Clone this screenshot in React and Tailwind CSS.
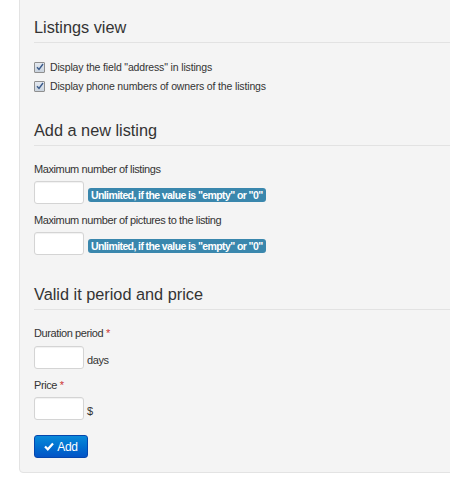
import React from "react";

const font = { fontFamily: '"Liberation Sans", Arial, sans-serif' };

function Check() {
  return (
    <span className="inline-flex items-center justify-center w-[11px] h-[11px] border border-[#8f8f8f] bg-gradient-to-b from-[#e4e9f0] to-[#c9d3de] rounded-[1px]">
      <svg width="8" height="8" viewBox="0 0 8 8">
        <path d="M1 4.2 L3 6.5 L7 1" fill="none" stroke="#3a5a8a" strokeWidth="1.4" />
      </svg>
    </span>
  );
}

function Heading({ children }) {
  return (
    <div className="border-b border-[#e2e2e2] pb-[5px]">
      <h2 className="text-[16.3px] leading-[20px] text-[#333]">{children}</h2>
    </div>
  );
}

function Badge() {
  return (
    <span className="block bg-[#3a87ad] text-white text-[10.5px] font-bold leading-[14px] tracking-[-0.6px] px-[3px] rounded-[3px] whitespace-nowrap">
      Unlimited, if the value is "empty" or "0"
    </span>
  );
}

function Input() {
  return <div className="w-[50px] h-[23px] shrink-0 bg-white border border-[#d4d4d4] rounded-[3px] shadow-[inset_0_1px_1px_rgba(0,0,0,0.06)]" />;
}

const label = "text-[11px] leading-[14px] tracking-[-0.4px]";

export default function App() {
  return (
    <div className="w-[450px] h-[490px] bg-white overflow-hidden" style={font}>
      <div className="ml-[19px] w-[460px] mt-[-10px] bg-[#f4f4f4] border border-[#e3e3e3] rounded-[4px] pl-[14px] pt-[26px] pb-[14px] text-[#333]">
        <Heading>Listings view</Heading>
        <div className="mt-[18px] flex flex-col gap-[7px] text-[10.5px] leading-[12px] tracking-[-0.15px]">
          <div className="flex items-center gap-[5px]"><Check /><span>Display the field "address" in listings</span></div>
          <div className="flex items-center gap-[5px]"><Check /><span>Display phone numbers of owners of the listings</span></div>
        </div>

        <div className="mt-[28px]"><Heading>Add a new listing</Heading></div>
        <div className={"mt-[16px] " + label}>Maximum number of listings</div>
        <div className="mt-[5px] flex items-end gap-[4px]"><Input /><span className="mb-[2px]"><Badge /></span></div>
        <div className={"mt-[9px] " + label}>Maximum number of pictures to the listing</div>
        <div className="mt-[5px] flex items-end gap-[4px]"><Input /><span className="mb-[2px]"><Badge /></span></div>

        <div className="mt-[29px]"><Heading>Valid it period and price</Heading></div>
        <div className={"mt-[16px] " + label}>Duration period <span className="text-[#c33]">*</span></div>
        <div className="mt-[6px] flex items-end gap-[3px]"><Input /><span className={label + " mb-[2px]"}>days</span></div>
        <div className={"mt-[9px] " + label}>Price <span className="text-[#c33]">*</span></div>
        <div className="mt-[5px] flex items-end gap-[3px]"><Input /><span className={label + " mb-[2px]"}>$</span></div>
        <button className="mt-[15px] w-[54px] h-[23px] rounded-[3px] bg-gradient-to-b from-[#0b8ad9] to-[#0453c6] border border-[#0446ad] text-white text-[12px] tracking-[-0.3px] flex items-center justify-center gap-[3px]">
          <svg width="10" height="9" viewBox="0 0 10 9">
            <path d="M1 4.5 L3.8 7.3 L9 1.5" fill="none" stroke="white" strokeWidth="2.2" />
          </svg>
          Add
        </button>
      </div>
    </div>
  );
}
